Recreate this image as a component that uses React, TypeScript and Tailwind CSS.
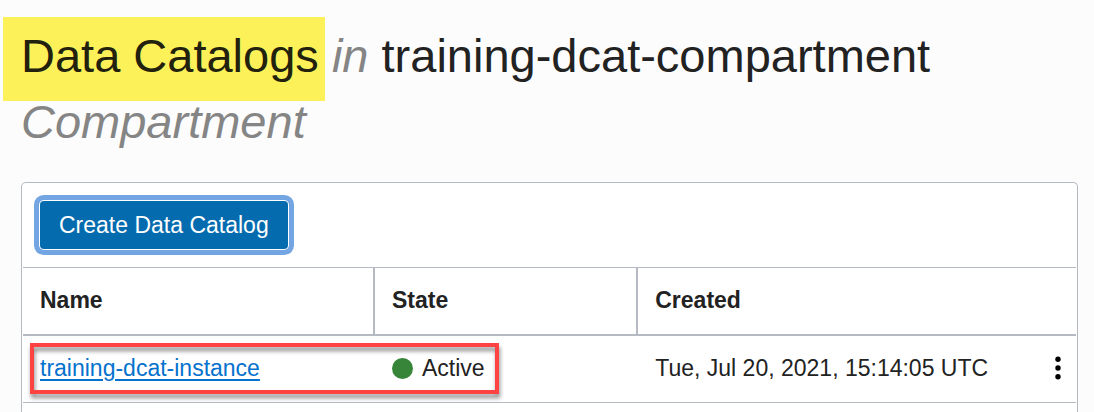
type Catalog = { name: string; state: string; created: string };

const catalogs: Catalog[] = [
  { name: "training-dcat-instance", state: "Active", created: "Tue, Jul 20, 2021, 15:14:05 UTC" },
];

function Heading() {
  return (
    <h1 className="text-[47px] leading-[66px] text-[#222222]">
      <span className="-ml-[18px] -mr-1.5 bg-[#fcf158] pt-[12px] pr-1.5 pb-[19px] pl-[18px] text-[#22210d]">
        Data Catalogs
      </span>{" "}
      <em className="text-[#858585]">in</em> training-dcat-compartment
      <br />
      <em className="text-[#858585]">Compartment</em>
    </h1>
  );
}

function CatalogTable() {
  return (
    <table className="w-full table-fixed border-separate border-spacing-0 text-left">
      <thead>
        <tr className="h-[68px]">
          <th scope="col" className="w-[352px] border-r-2 border-b-2 border-[#b5bac2] pb-0.5 pl-[17px] font-bold">
            Name
          </th>
          <th scope="col" className="w-1/4 border-r-2 border-b-2 border-[#b5bac2] pb-0.5 pl-[17px] font-bold">
            State
          </th>
          <th scope="col" className="border-b-2 border-[#b5bac2] pb-0.5 pl-[17px] font-bold">
            Created
          </th>
          <td className="w-[37px] border-b-2 border-[#b5bac2]" />
        </tr>
      </thead>
      <tbody>
        {catalogs.map((catalog) => (
          <tr key={catalog.name} className="h-[67px]">
            <td className="relative border-b border-[#b5bac2] pb-0.5 pl-[17px]">
              <a
                href="#instance"
                className="text-[#0572ce] underline decoration-2 underline-offset-3"
              >
                {catalog.name}
              </a>
              <div className="pointer-events-none absolute top-[7px] left-[7px] z-10 h-[51px] w-[469px] border-4 border-[#ff4242] drop-shadow-[1px_4px_2px_rgba(0,0,0,0.45)]" />
            </td>
            <td className="border-b border-[#b5bac2] pb-0.5 pl-[17px]">
              <span className="flex items-center gap-[9px]">
                <span className="size-[21px] rounded-full bg-[#368539]" />
                {catalog.state}
              </span>
            </td>
            <td className="border-b border-[#b5bac2] pb-0.5 pl-[17px] whitespace-nowrap">{catalog.created}</td>
            <td className="border-b border-[#b5bac2] pb-0.5">
              <button type="button" aria-label="Actions" className="flex w-full justify-center">
                <svg viewBox="0 0 6 24" className="h-6 w-[6px]" fill="#000">
                  <circle cx="3" cy="3.3" r="2.7" />
                  <circle cx="3" cy="12" r="2.7" />
                  <circle cx="3" cy="20.7" r="2.7" />
                </svg>
              </button>
            </td>
          </tr>
        ))}
      </tbody>
    </table>
  );
}

export default function App() {
  return (
    <main className="flex min-h-screen flex-col bg-[#fcfcfc] pt-[23px] pr-4 pl-[21px] font-['Liberation_Sans',Arial,sans-serif] text-[23px] leading-7 text-[#222222]">
      <Heading />
      <section className="mt-[27px] flex-1 rounded-t-[5px] border border-b-0 border-[#b5bac2] bg-white px-px">
        <div className="flex border-b border-[#b5bac2] px-[17px] py-[18px]">
          <button
            type="button"
            className="h-12 rounded-[4px] bg-[#046bae] px-[19px] text-white ring-5 ring-[#73a5e3] ring-offset-1"
          >
            Create Data Catalog
          </button>
        </div>
        <CatalogTable />
      </section>
    </main>
  );
}
